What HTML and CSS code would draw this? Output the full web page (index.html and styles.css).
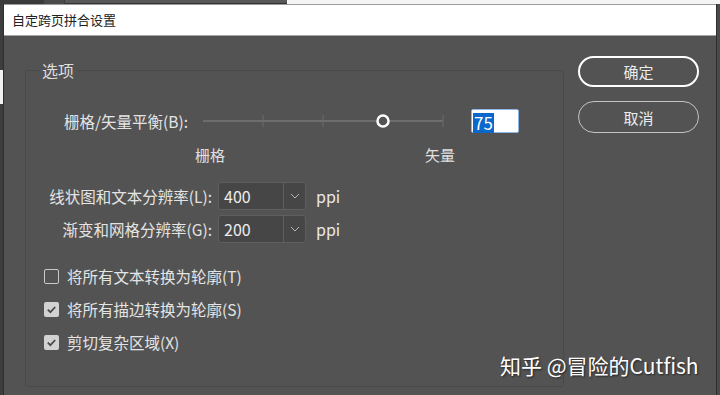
FILE: index.html
```html
<!DOCTYPE html>
<html lang="zh-CN">
<head>
    <meta charset="UTF-8">
    <meta name="viewport" content="width=device-width, initial-scale=1.0">
    <title>自定跨页拼合设置</title>
    <link rel="stylesheet" href="styles.css">
</head>
<body>

    <!-- Window behind the dialog -->
    <div class="backdrop">
        <div class="backdrop-dark"><span class="backdrop-tab"></span></div>
        <div class="backdrop-mid"></div>
        <div class="backdrop-light"></div>
    </div>

    <div class="screen">
        <div class="side-left"><div class="side-patch"></div></div>

        <div class="dialog">
            <div class="titlebar">自定跨页拼合设置</div>

            <div class="dialog-body">
                <fieldset class="options">
                    <legend>选项</legend>

                    <div class="balance-row">
                        <label class="balance-label">栅格/矢量平衡(B):</label>
                        <svg class="slider" width="242" height="16" viewBox="0 0 242 16">
                            <line x1="1" y1="8" x2="241" y2="8" stroke="#6d6d6d" stroke-width="2"/>
                            <line x1="61" y1="2" x2="61" y2="14" stroke="#6d6d6d" stroke-width="1"/>
                            <line x1="121" y1="2" x2="121" y2="14" stroke="#6d6d6d" stroke-width="1"/>
                            <line x1="241" y1="2" x2="241" y2="14" stroke="#6d6d6d" stroke-width="1"/>
                            <circle cx="181" cy="8" r="5.5" fill="#535353" stroke="#ffffff" stroke-width="2.5"/>
                        </svg>
                        <div class="value-box"><span class="value-sel">75</span></div>
                    </div>

                    <div class="scale-labels">
                        <span class="scale-min">栅格</span>
                        <span class="scale-max">矢量</span>
                    </div>

                    <div class="resolution-grid">
                        <label class="res-label">线状图和文本分辨率(L):</label>
                        <div class="select">
                            <span class="select-value">400</span>
                            <span class="select-arrow">
                                <svg width="10" height="6" viewBox="0 0 10 6"><path d="M1 1 L5 5 L9 1" fill="none" stroke="#b5b5b5" stroke-width="1"/></svg>
                            </span>
                        </div>
                        <span class="unit">ppi</span>

                        <label class="res-label">渐变和网格分辨率(G):</label>
                        <div class="select">
                            <span class="select-value">200</span>
                            <span class="select-arrow">
                                <svg width="10" height="6" viewBox="0 0 10 6"><path d="M1 1 L5 5 L9 1" fill="none" stroke="#b5b5b5" stroke-width="1"/></svg>
                            </span>
                        </div>
                        <span class="unit">ppi</span>
                    </div>

                    <div class="checks">
                        <div class="check-row">
                            <span class="checkbox"></span>
                            <span class="check-label">将所有文本转换为轮廓(T)</span>
                        </div>
                        <div class="check-row">
                            <span class="checkbox checked">
                                <svg width="15" height="15" viewBox="0 0 15 15"><path d="M3.8 7.6 L6.4 10.2 L11.2 5" fill="none" stroke="#4a4a4a" stroke-width="1.8"/></svg>
                            </span>
                            <span class="check-label">将所有描边转换为轮廓(S)</span>
                        </div>
                        <div class="check-row">
                            <span class="checkbox checked">
                                <svg width="15" height="15" viewBox="0 0 15 15"><path d="M3.8 7.6 L6.4 10.2 L11.2 5" fill="none" stroke="#4a4a4a" stroke-width="1.8"/></svg>
                            </span>
                            <span class="check-label">剪切复杂区域(X)</span>
                        </div>
                    </div>
                </fieldset>

                <div class="actions">
                    <button class="btn btn-primary">确定</button>
                    <button class="btn">取消</button>
                </div>
            </div>
        </div>

        <div class="side-right"></div>
    </div>

    <!-- Watermark -->
    <div class="watermark">知乎 @冒险的Cutfish</div>

</body>
</html>
```

FILE: styles.css
```css
body {
    margin: 0;
    width: 720px;
    height: 395px;
    overflow: hidden;
    position: relative;
    background-color: #3b3b3b;
    font-family: "Noto Sans CJK SC", "Noto Sans", sans-serif;
    color: #e4e4e4;
}

/* strip of the window behind */
.backdrop {
    display: flex;
    height: 4px;
}
.backdrop-dark {
    width: 65px;
    background-color: #3a3a3a;
}
.backdrop-tab {
    display: block;
    margin-left: 44px;
    width: 20px;
    height: 4px;
    background-color: #4a4a4a;
}
.backdrop-mid {
    width: 222px;
    background-color: #585858;
    border-bottom: 1px solid #333;
    box-sizing: border-box;
}
.backdrop-light {
    flex: 1;
    background-color: #f4f4f4;
}

.screen {
    display: flex;
    height: 391px;
}
.side-left {
    width: 3px;
    background-color: #3d3d3d;
}
.side-patch {
    margin-top: 66px;
    height: 34px;
    background-color: #f2f2f2;
}
.side-right {
    width: 3px;
    background-color: #4a4a4a;
}

.dialog {
    width: 714px;
    border-left: 1px solid #2e2e2e;
    border-right: 1px solid #2e2e2e;
    box-sizing: border-box;
    display: flex;
    flex-direction: column;
}
.titlebar {
    height: 32px;
    box-sizing: border-box;
    background-color: #ffffff;
    border-top: 1px solid #9c9c9c;
    border-bottom: 1px solid #a4a4a4;
    padding-left: 8px;
    font-size: 13px;
    line-height: 30px;
    color: #222;
}
.dialog-body {
    flex: 1;
    background-color: #535353;
    display: flex;
    align-items: flex-start;
    padding-left: 21px;
}

/* group box */
.options {
    margin: 24px 0 0 0;
    padding: 0;
    width: 539px;
    height: 327px;
    box-sizing: border-box;
    border: 1px solid #494949;
    border-radius: 3px;
}
.options legend {
    margin-left: 13px;
    padding: 0 3px;
    font-size: 16px;
    line-height: 20px;
    color: #dedede;
}

.balance-row {
    display: flex;
    align-items: center;
    height: 24px;
    margin-top: 29px;
    padding-left: 38px;
}
.balance-label {
    width: 138px;
    font-size: 15.5px;
    white-space: nowrap;
}
.value-box {
    margin-left: 27px;
    width: 48px;
    height: 24px;
    box-sizing: border-box;
    border: 1px solid #8fb6e6;
    border-radius: 2px;
    background-color: #ffffff;
    padding: 1px 0 0 1px;
}
.value-sel {
    display: inline-block;
    height: 20px;
    padding: 0 1px;
    background-color: #0a68cc;
    color: #ffffff;
    font-size: 17px;
    line-height: 20px;
}

.scale-labels {
    display: flex;
    margin-top: 12px;
    font-size: 15px;
    line-height: 20px;
    color: #e0e0e0;
}
.scale-min {
    margin-left: 169px;
}
.scale-max {
    margin-left: 200px;
}

.resolution-grid {
    display: grid;
    grid-template-columns: 186px 88px auto;
    grid-auto-rows: 28px;
    column-gap: 6px;
    row-gap: 5px;
    align-items: center;
    margin-top: 17px;
}
.res-label {
    text-align: right;
    font-size: 15.5px;
    white-space: nowrap;
}
.select {
    display: flex;
    height: 28px;
    box-sizing: border-box;
    border: 1px solid #5f5f5f;
    border-radius: 3px;
    background-color: #464646;
}
.select-value {
    flex: 1;
    padding-left: 5px;
    font-size: 16px;
    line-height: 26px;
    color: #ececec;
}
.select-arrow {
    width: 22px;
    border-left: 1px solid #5f5f5f;
    box-sizing: border-box;
    display: flex;
    align-items: center;
    justify-content: center;
}
.unit {
    margin-left: 4px;
    font-size: 16px;
    color: #e8e8e8;
}

.checks {
    margin-top: 23px;
    padding-left: 18px;
    display: flex;
    flex-direction: column;
    gap: 13px;
}
.check-row {
    display: flex;
    align-items: center;
    height: 20px;
}
.checkbox {
    width: 15px;
    height: 15px;
    box-sizing: border-box;
    border: 1.5px solid #c9c9c9;
    border-radius: 2px;
}
.checkbox.checked {
    border: none;
    background-color: #d2d2d2;
}
.checkbox svg {
    display: block;
}
.check-label {
    margin-left: 8px;
    font-size: 15.5px;
    white-space: nowrap;
}

.actions {
    margin: 20px 0 0 14px;
    display: flex;
    flex-direction: column;
    gap: 14px;
}
.btn {
    width: 121px;
    height: 32px;
    border: 1px solid #c4c4c4;
    border-radius: 16px;
    background-color: transparent;
    color: #ececec;
    font-family: "Noto Sans CJK SC", "Noto Sans", sans-serif;
    font-size: 15px;
    padding: 0;
}
.btn-primary {
    height: 31px;
    border: 2px solid #ffffff;
}

.watermark {
    position: absolute;
    left: 500px;
    top: 350px;
    font-size: 21px;
    line-height: 30px;
    color: #ffffff;
    text-shadow: 1px 1px 2px rgba(0, 0, 0, 0.6);
    white-space: nowrap;
}
```
